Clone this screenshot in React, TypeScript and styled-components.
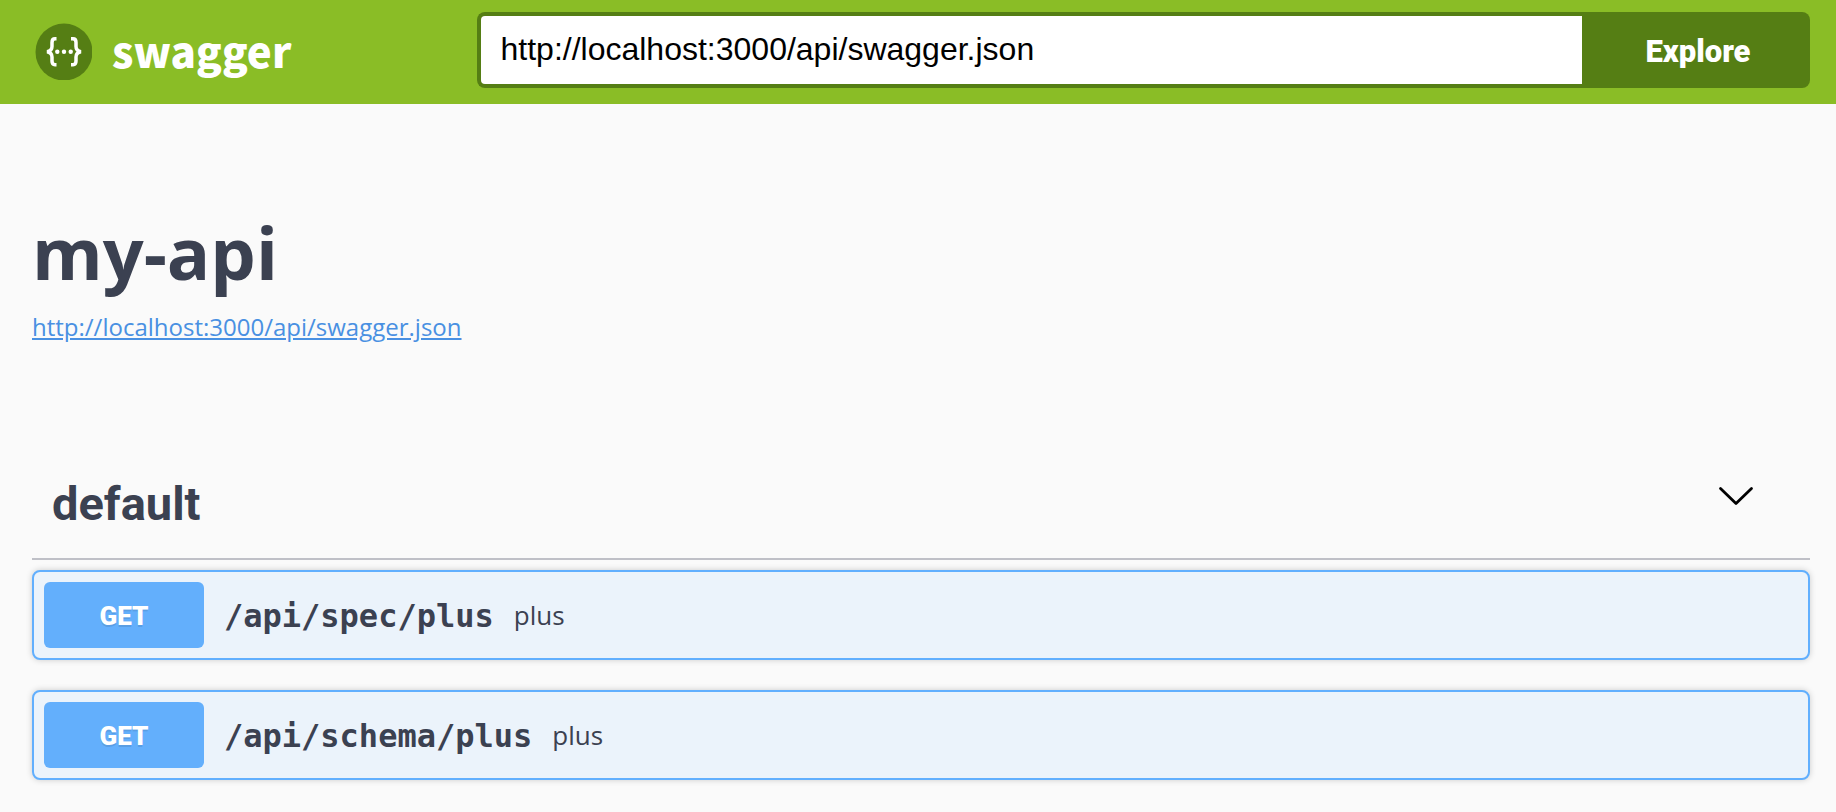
import React, { useState } from "react";
import styled, { createGlobalStyle } from "styled-components";

const GlobalStyle = createGlobalStyle`
  *, *::before, *::after { box-sizing: border-box; }
  body {
    margin: 0;
    background: #fafafa;
    color: #3b4151;
    font-family: "Open Sans", sans-serif;
  }
  button, input { font: inherit; color: inherit; }
`;

const TopBar = styled.header`
  display: flex;
  align-items: center;
  padding: 12px 26px 16px 32px;
  background: #8abd26;
`;

const Brand = styled.a`
  flex: 1 1 0;
  min-width: 0;
  display: flex;
  align-items: center;
  gap: 20px;
  color: #fff;
  text-decoration: none;
`;

const BrandName = styled.span`
  font: 900 42px/60px "Noto Sans CJK SC", sans-serif;
`;

const SpecForm = styled.form`
  flex: 3 1 0;
  min-width: 0;
  display: flex;
  height: 76px;
`;

const SpecInput = styled.input`
  flex: 1;
  min-width: 0;
  margin: 0;
  padding: 0 20px 2px;
  border: 4px solid #557e14;
  border-right: 0;
  border-radius: 8px 0 0 8px;
  outline: 0;
  background: #fff;
  color: #000;
  font: 400 32px "Liberation Sans", sans-serif;
`;

const ExploreButton = styled.button`
  width: 228px;
  padding: 2px 0 0 4px;
  border: 0;
  border-radius: 0 8px 8px 0;
  background: #557e14;
  color: #fff;
  font: 900 31px Roboto, sans-serif;
  cursor: pointer;
`;

const Main = styled.main`
  padding: 108px 26px 32px 32px;
`;

const Title = styled.h1`
  margin: 0 0 16px;
  font-size: 72px;
  line-height: 80px;
`;

const SpecLink = styled.a`
  display: table;
  color: #4990e2;
  font-size: 24px;
  line-height: 38px;
`;

const TagSection = styled.section`
  margin-top: 104px;
`;

const TagHeader = styled.div`
  display: flex;
  align-items: center;
  justify-content: space-between;
  height: 110px;
  padding: 0 56px 0 20px;
  border-bottom: 2px solid #bfc0c7;
`;

const TagName = styled.h2`
  margin: 0;
  font: 700 47px/56px Roboto, sans-serif;
`;

const ToggleButton = styled.button`
  display: flex;
  padding: 0 0 16px;
  border: 0;
  background: none;
  cursor: pointer;
`;

const Operations = styled.ul`
  display: flex;
  flex-direction: column;
  gap: 30px;
  margin: 10px 0 0;
  padding: 0;
  list-style: none;
`;

const Operation = styled.button`
  display: flex;
  align-items: center;
  width: 100%;
  padding: 10px;
  border: 2px solid #61affe;
  border-radius: 8px;
  background: #ebf3fb;
  box-shadow: 0 0 6px rgba(0, 0, 0, 0.19);
  text-align: left;
  cursor: pointer;
`;

const Method = styled.span`
  width: 160px;
  margin-right: 20px;
  padding: 3px 0 1px;
  border-radius: 6px;
  background: #63affc;
  color: #fff;
  font: 900 26px/62px Roboto, sans-serif;
  text-align: center;
  text-shadow: 0 2px 0 rgba(0, 0, 0, 0.1);
`;

const Path = styled.span`
  margin-right: 20px;
  padding-top: 2px;
  font: 700 32px/40px "DejaVu Sans Mono", monospace;
`;

const Summary = styled.span`
  font-size: 26px;
  line-height: 40px;
`;

function SwaggerMark() {
  return (
    <svg width="60" height="60" viewBox="0 0 60 60" aria-hidden="true">
      <circle cx="32" cy="32" r="28.5" fill="#557e14" />
      <g fill="none" stroke="#fff" strokeWidth="3.5">
        <path d="M24.500 18.800H23Q20 18.800 20 22.500V26.500Q20 31 15 31.700Q20 32.400 20 37V41Q20 44.700 23 44.700H24.500" />
        <path d="M39 18.800H41Q44 18.800 44 22.500V26.500Q44 31 49 31.700Q44 32.400 44 37V41Q44 44.700 41 44.700H39" />
      </g>
      <g fill="#fff">
        <circle cx="25.300" cy="31.800" r="2.200" />
        <circle cx="32" cy="31.800" r="2.200" />
        <circle cx="38.700" cy="31.800" r="2.200" />
      </g>
    </svg>
  );
}

function Chevron({ open }: { open: boolean }) {
  return (
    <svg width="36" height="20" viewBox="0 0 36 20" aria-hidden="true">
      <path
        d={open ? "M2.500 2.500L18 17.500L33.500 2.500" : "M2.500 17.500L18 2.500L33.500 17.500"}
        fill="none"
        stroke="#000"
        strokeWidth="2.800"
        strokeLinecap="round"
        strokeLinejoin="round"
      />
    </svg>
  );
}

const specUrl = "http://localhost:3000/api/swagger.json";

const operations = [
  { method: "GET", path: "/api/spec/plus", summary: "plus" },
  { method: "GET", path: "/api/schema/plus", summary: "plus" },
];

export default function App() {
  const [url, setUrl] = useState(specUrl);
  const [open, setOpen] = useState(true);

  return (
    <>
      <GlobalStyle />
      <TopBar>
        <Brand href="#">
          <SwaggerMark />
          <BrandName>swagger</BrandName>
        </Brand>
        <SpecForm onSubmit={(e) => e.preventDefault()}>
          <SpecInput
            type="text"
            aria-label="Specification URL"
            value={url}
            spellCheck={false}
            onChange={(e) => setUrl(e.target.value)}
          />
          <ExploreButton type="submit">Explore</ExploreButton>
        </SpecForm>
      </TopBar>
      <Main>
        <Title>my-api</Title>
        <SpecLink href={specUrl}>{specUrl}</SpecLink>
        <TagSection>
          <TagHeader>
            <TagName>default</TagName>
            <ToggleButton
              type="button"
              aria-label="Toggle operations"
              aria-expanded={open}
              onClick={() => setOpen(!open)}
            >
              <Chevron open={open} />
            </ToggleButton>
          </TagHeader>
          {open && (
            <Operations>
              {operations.map((op) => (
                <li key={op.path}>
                  <Operation type="button">
                    <Method>{op.method}</Method>
                    <Path>{op.path}</Path>
                    <Summary>{op.summary}</Summary>
                  </Operation>
                </li>
              ))}
            </Operations>
          )}
        </TagSection>
      </Main>
    </>
  );
}
